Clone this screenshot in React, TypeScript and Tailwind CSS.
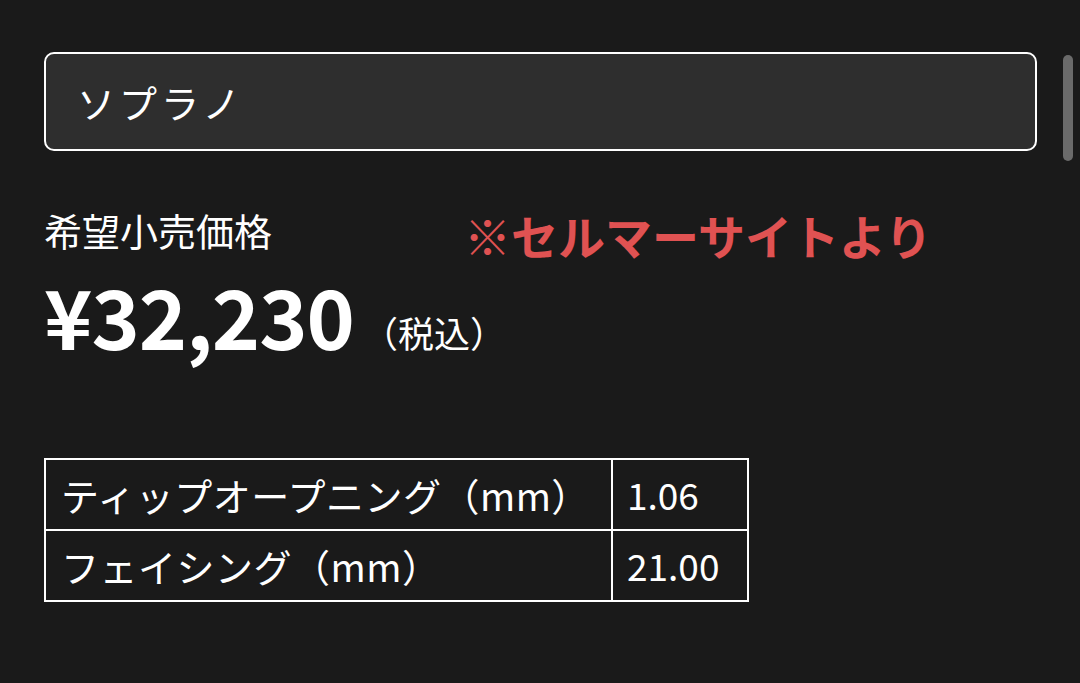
const jp = { fontFamily: '"Noto Sans CJK JP", "Noto Sans", sans-serif' }

const specs = [
  { label: 'ティップオープニング（mm）', value: '1.06' },
  { label: 'フェイシング（mm）', value: '21.00' },
]

export default function App() {
  return (
    <div className="relative w-[1080px] h-[683px] overflow-hidden bg-[#1a1a1a] text-white" style={jp}>
      {/* scrollbar */}
      <div className="absolute left-[1063px] top-[55px] w-[10px] h-[106px] rounded-full bg-[#6a6a6a]" />

      <div className="pl-[44px] pt-[52px] w-[1037px]">
        <div className="h-[99px] rounded-[10px] border-2 border-white bg-[#2e2e2e] flex items-center pl-[31px]">
          <span className="text-[38px] leading-none tracking-[4px]">ソプラノ</span>
        </div>

        <div className="mt-[58px] flex items-start">
          <div className="w-[420px] text-[38px] leading-none pt-[2px]">希望小売価格</div>
          <div className="text-[47px] leading-none font-bold text-[#e05252] pt-[2px]">※セルマーサイトより</div>
        </div>

        <div className="mt-[16px] flex items-end">
          <span className="text-[82px] leading-none font-bold tracking-[-1px]">¥32,230</span>
          <span className="ml-[8px] mb-[6px] text-[36px] leading-none">（税込）</span>
        </div>

        <table className="mt-[102px] border-collapse border-2 border-white">
          <tbody>
            {specs.map(s => (
              <tr key={s.label} className="h-[71px]">
                <td className="w-[567px] border-2 border-white pl-[15px] text-[38px] leading-none tracking-[0.5px]">{s.label}</td>
                <td className="w-[136px] border-2 border-white pl-[14px] text-[37px] leading-none">{s.value}</td>
              </tr>
            ))}
          </tbody>
        </table>
      </div>
    </div>
  )
}
